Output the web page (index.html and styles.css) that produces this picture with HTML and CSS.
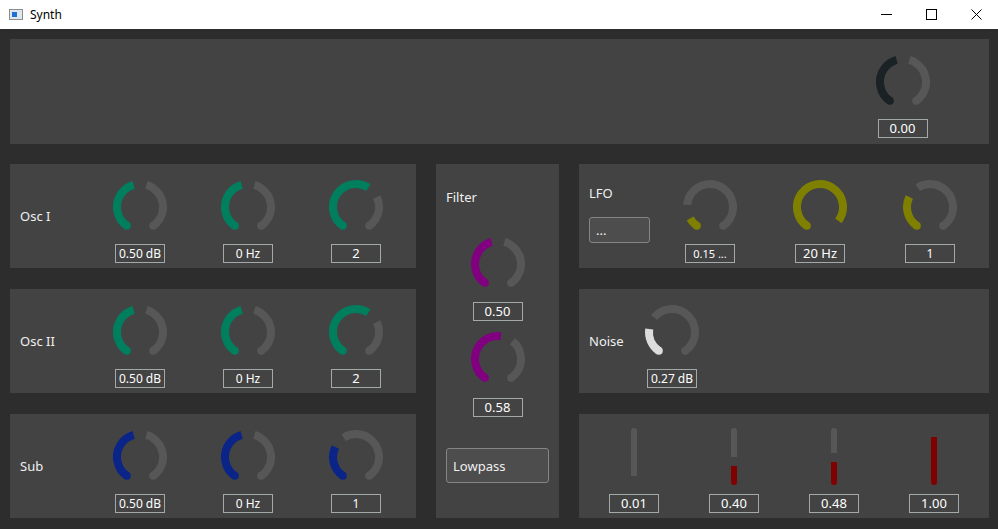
FILE: index.html
```html
<!DOCTYPE html>
<html>
<head>
<meta charset="utf-8">
<title>Synth</title>
<link rel="stylesheet" href="styles.css">
</head>
<body>
<header class="titlebar">
  <svg class="app-icon" width="14" height="11" viewBox="0 0 14 11">
    <rect x="0.5" y="0.5" width="13" height="10" fill="#dfe6ee" stroke="#8c8c8c"/>
    <rect x="3" y="3" width="5" height="5" fill="#1f6fd6"/>
  </svg>
  <span class="title">Synth</span>
  <div class="win-btn btn-min"><svg width="11" height="11" viewBox="0 0 11 11"><path d="M0 5.5H11" stroke="#000" stroke-width="1"/></svg></div>
  <div class="win-btn btn-max"><svg width="11" height="11" viewBox="0 0 11 11"><rect x="0.5" y="0.5" width="10" height="10" fill="none" stroke="#000"/></svg></div>
  <div class="win-btn btn-close"><svg width="11" height="11" viewBox="0 0 11 11"><path d="M0.5 0.5L10.5 10.5M10.5 0.5L0.5 10.5" stroke="#000" stroke-width="1"/></svg></div>
</header>

<main class="app">
  <section class="panel top-panel">
    <div class="cell cell-top">
      <svg class="knob" width="56" height="54" viewBox="0 0 56 54">
        <g transform="rotate(125 28 28)" fill="none" stroke-width="8">
          <circle cx="28" cy="28" r="23" pathLength="360" stroke="#1b2226" stroke-dasharray="129 360"/>
          <circle cx="28" cy="28" r="23" pathLength="360" stroke="#575757" stroke-dasharray="0 161 129 360"/>
        </g>
        <circle cx="14.81" cy="46.84" r="4" fill="#1b2226"/>
        <circle cx="41.19" cy="46.84" r="4" fill="#575757"/>
      </svg>
      <div class="value v13">0.00</div>
    </div>
  </section>

  <div class="grid">
    <!-- Osc I -->
    <section class="panel row osc1">
      <div class="label">Osc I</div>
      <div class="cell w108">
        <svg class="knob" width="56" height="54" viewBox="0 0 56 54">
          <g transform="rotate(125 28 28)" fill="none" stroke-width="8">
            <circle cx="28" cy="28" r="23" pathLength="360" stroke="#007f5f" stroke-dasharray="129 360"/>
            <circle cx="28" cy="28" r="23" pathLength="360" stroke="#575757" stroke-dasharray="0 161 129 360"/>
          </g>
          <circle cx="14.81" cy="46.84" r="4" fill="#007f5f"/>
          <circle cx="41.19" cy="46.84" r="4" fill="#575757"/>
        </svg>
        <div class="value">0.50 dB</div>
      </div>
      <div class="cell w108">
        <svg class="knob" width="56" height="54" viewBox="0 0 56 54">
          <g transform="rotate(125 28 28)" fill="none" stroke-width="8">
            <circle cx="28" cy="28" r="23" pathLength="360" stroke="#007f5f" stroke-dasharray="129 360"/>
            <circle cx="28" cy="28" r="23" pathLength="360" stroke="#575757" stroke-dasharray="0 161 129 360"/>
          </g>
          <circle cx="14.81" cy="46.84" r="4" fill="#007f5f"/>
          <circle cx="41.19" cy="46.84" r="4" fill="#575757"/>
        </svg>
        <div class="value">0 Hz</div>
      </div>
      <div class="cell w108">
        <svg class="knob" width="56" height="54" viewBox="0 0 56 54">
          <g transform="rotate(125 28 28)" fill="none" stroke-width="8">
            <circle cx="28" cy="28" r="23" pathLength="360" stroke="#007f5f" stroke-dasharray="177.3 360"/>
            <circle cx="28" cy="28" r="23" pathLength="360" stroke="#575757" stroke-dasharray="0 209.3 80.7 360"/>
          </g>
          <circle cx="14.81" cy="46.84" r="4" fill="#007f5f"/>
          <circle cx="41.19" cy="46.84" r="4" fill="#575757"/>
        </svg>
        <div class="value v13">2</div>
      </div>
    </section>

    <!-- Filter -->
    <section class="panel filter">
      <div class="filter-label">Filter</div>
      <svg class="knob f-knob1" width="56" height="54" viewBox="0 0 56 54">
        <g transform="rotate(125 28 28)" fill="none" stroke-width="8">
          <circle cx="28" cy="28" r="23" pathLength="360" stroke="#800080" stroke-dasharray="129 360"/>
          <circle cx="28" cy="28" r="23" pathLength="360" stroke="#575757" stroke-dasharray="0 161 129 360"/>
        </g>
        <circle cx="14.81" cy="46.84" r="4" fill="#800080"/>
        <circle cx="41.19" cy="46.84" r="4" fill="#575757"/>
      </svg>
      <div class="value v13 f-val1">0.50</div>
      <svg class="knob f-knob2" width="56" height="54" viewBox="0 0 56 54">
        <g transform="rotate(125 28 28)" fill="none" stroke-width="8">
          <circle cx="28" cy="28" r="23" pathLength="360" stroke="#800080" stroke-dasharray="152.2 360"/>
          <circle cx="28" cy="28" r="23" pathLength="360" stroke="#575757" stroke-dasharray="0 184.2 105.8 360"/>
        </g>
        <circle cx="14.81" cy="46.84" r="4" fill="#800080"/>
        <circle cx="41.19" cy="46.84" r="4" fill="#575757"/>
      </svg>
      <div class="value v13 f-val2">0.58</div>
      <div class="btn btn-lowpass">Lowpass</div>
    </section>

    <!-- LFO -->
    <section class="panel row lfo">
      <div class="lfo-side">
        <div class="side-label">LFO</div>
        <div class="btn btn-dots">...</div>
      </div>
      <div class="cell w110">
        <svg class="knob" width="56" height="54" viewBox="0 0 56 54">
          <g transform="rotate(125 28 28)" fill="none" stroke-width="8">
            <circle cx="28" cy="28" r="23" pathLength="360" stroke="#808000" stroke-dasharray="25 360"/>
            <circle cx="28" cy="28" r="23" pathLength="360" stroke="#575757" stroke-dasharray="0 60 230 360"/>
          </g>
          <circle cx="14.81" cy="46.84" r="4" fill="#808000"/>
          <circle cx="41.19" cy="46.84" r="4" fill="#575757"/>
        </svg>
        <div class="value v11">0.15 ...</div>
      </div>
      <div class="cell w110">
        <svg class="knob" width="56" height="54" viewBox="0 0 56 54">
          <g transform="rotate(125 28 28)" fill="none" stroke-width="8">
            <circle cx="28" cy="28" r="23" pathLength="360" stroke="#808000" stroke-dasharray="272 360"/>
          </g>
          <circle cx="14.81" cy="46.84" r="4" fill="#808000"/>
        </svg>
        <div class="value v13">20 Hz</div>
      </div>
      <div class="cell w110">
        <svg class="knob" width="56" height="54" viewBox="0 0 56 54">
          <g transform="rotate(125 28 28)" fill="none" stroke-width="8">
            <circle cx="28" cy="28" r="23" pathLength="360" stroke="#808000" stroke-dasharray="80.7 360"/>
            <circle cx="28" cy="28" r="23" pathLength="360" stroke="#575757" stroke-dasharray="0 112.7 177.3 360"/>
          </g>
          <circle cx="14.81" cy="46.84" r="4" fill="#808000"/>
          <circle cx="41.19" cy="46.84" r="4" fill="#575757"/>
        </svg>
        <div class="value">1</div>
      </div>
    </section>

    <!-- Osc II -->
    <section class="panel row osc2">
      <div class="label">Osc II</div>
      <div class="cell w108">
        <svg class="knob" width="56" height="54" viewBox="0 0 56 54">
          <g transform="rotate(125 28 28)" fill="none" stroke-width="8">
            <circle cx="28" cy="28" r="23" pathLength="360" stroke="#007f5f" stroke-dasharray="129 360"/>
            <circle cx="28" cy="28" r="23" pathLength="360" stroke="#575757" stroke-dasharray="0 161 129 360"/>
          </g>
          <circle cx="14.81" cy="46.84" r="4" fill="#007f5f"/>
          <circle cx="41.19" cy="46.84" r="4" fill="#575757"/>
        </svg>
        <div class="value">0.50 dB</div>
      </div>
      <div class="cell w108">
        <svg class="knob" width="56" height="54" viewBox="0 0 56 54">
          <g transform="rotate(125 28 28)" fill="none" stroke-width="8">
            <circle cx="28" cy="28" r="23" pathLength="360" stroke="#007f5f" stroke-dasharray="129 360"/>
            <circle cx="28" cy="28" r="23" pathLength="360" stroke="#575757" stroke-dasharray="0 161 129 360"/>
          </g>
          <circle cx="14.81" cy="46.84" r="4" fill="#007f5f"/>
          <circle cx="41.19" cy="46.84" r="4" fill="#575757"/>
        </svg>
        <div class="value">0 Hz</div>
      </div>
      <div class="cell w108">
        <svg class="knob" width="56" height="54" viewBox="0 0 56 54">
          <g transform="rotate(125 28 28)" fill="none" stroke-width="8">
            <circle cx="28" cy="28" r="23" pathLength="360" stroke="#007f5f" stroke-dasharray="177.3 360"/>
            <circle cx="28" cy="28" r="23" pathLength="360" stroke="#575757" stroke-dasharray="0 209.3 80.7 360"/>
          </g>
          <circle cx="14.81" cy="46.84" r="4" fill="#007f5f"/>
          <circle cx="41.19" cy="46.84" r="4" fill="#575757"/>
        </svg>
        <div class="value v13">2</div>
      </div>
    </section>

    <!-- Noise -->
    <section class="panel row noise">
      <div class="label noise-label">Noise</div>
      <div class="cell w56">
        <svg class="knob" width="56" height="54" viewBox="0 0 56 54">
          <g transform="rotate(125 28 28)" fill="none" stroke-width="8">
            <circle cx="28" cy="28" r="23" pathLength="360" stroke="#dcdcdc" stroke-dasharray="62.3 360"/>
            <circle cx="28" cy="28" r="23" pathLength="360" stroke="#575757" stroke-dasharray="0 94.3 195.7 360"/>
          </g>
          <circle cx="14.81" cy="46.84" r="4" fill="#dcdcdc"/>
          <circle cx="41.19" cy="46.84" r="4" fill="#575757"/>
        </svg>
        <div class="value">0.27 dB</div>
      </div>
    </section>

    <!-- Sub -->
    <section class="panel row sub">
      <div class="label">Sub</div>
      <div class="cell w108">
        <svg class="knob" width="56" height="54" viewBox="0 0 56 54">
          <g transform="rotate(125 28 28)" fill="none" stroke-width="8">
            <circle cx="28" cy="28" r="23" pathLength="360" stroke="#0a2488" stroke-dasharray="129 360"/>
            <circle cx="28" cy="28" r="23" pathLength="360" stroke="#575757" stroke-dasharray="0 161 129 360"/>
          </g>
          <circle cx="14.81" cy="46.84" r="4" fill="#0a2488"/>
          <circle cx="41.19" cy="46.84" r="4" fill="#575757"/>
        </svg>
        <div class="value">0.50 dB</div>
      </div>
      <div class="cell w108">
        <svg class="knob" width="56" height="54" viewBox="0 0 56 54">
          <g transform="rotate(125 28 28)" fill="none" stroke-width="8">
            <circle cx="28" cy="28" r="23" pathLength="360" stroke="#0a2488" stroke-dasharray="129 360"/>
            <circle cx="28" cy="28" r="23" pathLength="360" stroke="#575757" stroke-dasharray="0 161 129 360"/>
          </g>
          <circle cx="14.81" cy="46.84" r="4" fill="#0a2488"/>
          <circle cx="41.19" cy="46.84" r="4" fill="#575757"/>
        </svg>
        <div class="value">0 Hz</div>
      </div>
      <div class="cell w108">
        <svg class="knob" width="56" height="54" viewBox="0 0 56 54">
          <g transform="rotate(125 28 28)" fill="none" stroke-width="8">
            <circle cx="28" cy="28" r="23" pathLength="360" stroke="#0a2488" stroke-dasharray="80.7 360"/>
            <circle cx="28" cy="28" r="23" pathLength="360" stroke="#575757" stroke-dasharray="0 112.7 177.3 360"/>
          </g>
          <circle cx="14.81" cy="46.84" r="4" fill="#0a2488"/>
          <circle cx="41.19" cy="46.84" r="4" fill="#575757"/>
        </svg>
        <div class="value">1</div>
      </div>
    </section>

    <!-- Sliders -->
    <section class="panel sliders">
      <div class="slider-cell">
        <div class="track"><div class="track-rest"></div><div class="track-handle"></div><div class="track-fill" style="height:0px"></div></div>
        <div class="value v13">0.01</div>
      </div>
      <div class="slider-cell">
        <div class="track"><div class="track-rest"></div><div class="track-handle"></div><div class="track-fill" style="height:19px"></div></div>
        <div class="value v13">0.40</div>
      </div>
      <div class="slider-cell">
        <div class="track"><div class="track-rest"></div><div class="track-handle"></div><div class="track-fill" style="height:23px"></div></div>
        <div class="value v13">0.48</div>
      </div>
      <div class="slider-cell">
        <div class="track"><div class="track-rest"></div><div class="track-handle"></div><div class="track-fill" style="height:48px"></div></div>
        <div class="value v13">1.00</div>
      </div>
    </section>
  </div>
</main>
</body>
</html>
```

FILE: styles.css
```css
* { box-sizing: border-box; }
html, body { margin: 0; padding: 0; }
body {
  width: 998px;
  height: 529px;
  overflow: hidden;
  background: #2d2d2d;
  font-family: "Noto Sans", "DejaVu Sans", sans-serif;
  color: #f0f0f0;
}

/* title bar */
.titlebar {
  height: 29px;
  background: #ffffff;
  display: flex;
  align-items: center;
  color: #000;
  font-size: 12px;
}
.app-icon { margin-left: 9px; margin-right: 7px; display: block; }
.title { flex: 1; }
.win-btn {
  height: 29px;
  display: flex;
  align-items: center;
  justify-content: center;
  flex: none;
}
.win-btn svg { display: block; }
.btn-min { width: 46px; }
.btn-max { width: 45px; }
.btn-close { width: 44px; }

/* main area */
.app { padding: 10px 9px 11px 10px; }
.panel { background: #434343; }

.top-panel {
  height: 105px;
  display: flex;
  justify-content: flex-end;
  padding-right: 57px;
}
.cell-top { width: 59px; }

.grid {
  margin-top: 20px;
  display: grid;
  grid-template-columns: 406px 123px 410px;
  grid-template-rows: repeat(3, 104px);
  column-gap: 20px;
  row-gap: 21px;
}
.osc1 { grid-column: 1; grid-row: 1; }
.osc2 { grid-column: 1; grid-row: 2; }
.sub { grid-column: 1; grid-row: 3; }
.filter { grid-column: 2; grid-row: 1 / 4; }
.lfo { grid-column: 3; grid-row: 1; }
.noise { grid-column: 3; grid-row: 2; }
.sliders { grid-column: 3; grid-row: 3; }

.row { display: flex; padding-left: 10px; }
.label {
  width: 66px;
  flex: none;
  align-self: center;
  font-size: 13px;
  line-height: 16px;
}
.noise-label { width: 55px; }

.cell {
  display: flex;
  flex-direction: column;
  align-items: center;
  padding-top: 15px;
  flex: none;
}
.w108 { width: 108px; }
.w110 { width: 110px; }
.w56 { width: 56px; }
.knob { display: block; flex: none; }

.value {
  margin-top: 11px;
  width: 50px;
  height: 19px;
  border: 1px solid #a3a8a8;
  font-size: 12px;
  line-height: 17px;
  text-align: center;
  color: #ffffff;
  white-space: nowrap;
  flex: none;
}
.v13 { font-size: 13px; }
.v11 { font-size: 11px; }

/* filter column */
.filter {
  display: flex;
  flex-direction: column;
  align-items: center;
  padding-top: 25px;
}
.filter-label {
  align-self: flex-start;
  margin-left: 10px;
  font-size: 13px;
  line-height: 16px;
}
.f-knob1 { margin-top: 31px; }
.f-val1 { margin-top: 12px; }
.f-knob2 { margin-top: 10px; }
.f-val2 { margin-top: 13px; }

.btn {
  border: 1px solid #858585;
  border-radius: 3px;
  background: #4d4d4d;
  font-size: 13px;
  color: #f0f0f0;
  padding-left: 6px;
  display: flex;
  align-items: center;
}
.btn-lowpass {
  align-self: flex-start;
  margin-left: 10px;
  margin-top: 31px;
  width: 103px;
  height: 35px;
}

/* LFO */
.lfo-side {
  width: 66px;
  flex: none;
  padding-top: 21px;
}
.side-label { font-size: 13px; line-height: 16px; }
.btn-dots {
  margin-top: 16px;
  width: 61px;
  height: 26px;
}

/* sliders */
.sliders { display: flex; padding-left: 5px; }
.slider-cell {
  width: 100px;
  flex: none;
  display: flex;
  flex-direction: column;
  align-items: center;
  padding-top: 14px;
}
.track {
  width: 6px;
  height: 57px;
  display: flex;
  flex-direction: column;
  flex: none;
}
.track-rest {
  flex: 1;
  background: #575757;
  border-radius: 3px 3px 0 0;
}
.track-handle { height: 9px; flex: none; }
.track-fill {
  flex: none;
  background: #800000;
  border-radius: 0 0 3px 3px;
}
.slider-cell .value { margin-top: 9px; }
```
